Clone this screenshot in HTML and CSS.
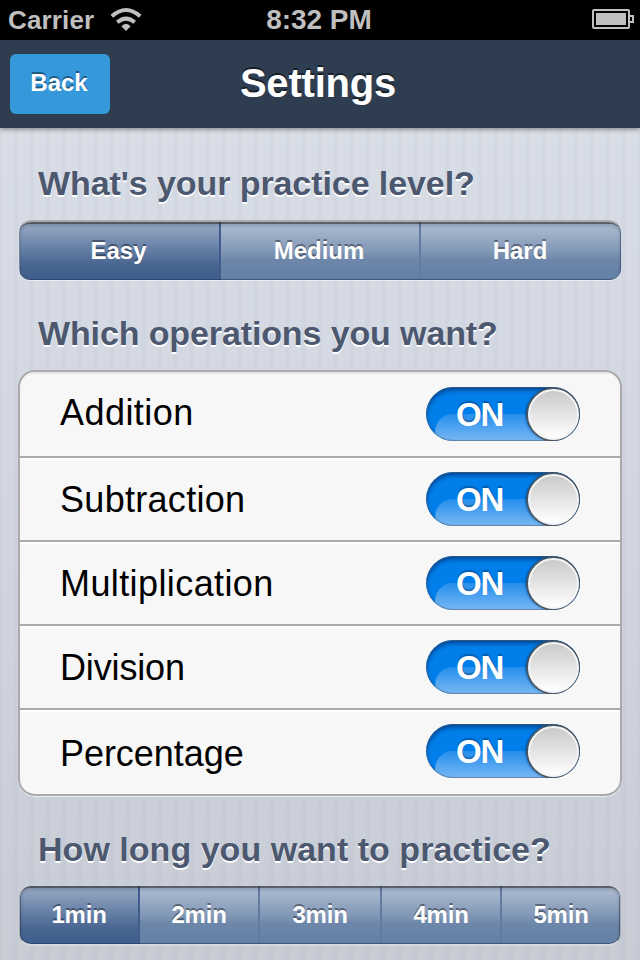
FILE: index.html
```html
<!DOCTYPE html>
<html lang="en">
<head>
<meta charset="utf-8">
<title>Settings</title>
<link rel="stylesheet" href="styles.css">
</head>
<body>
<div class="screen">
  <div class="status">
    <div class="carrier">
      <span class="carrier-name">Carrier</span>
      <svg class="wifi" width="34" height="26" viewBox="0 0 34 26" fill="none" stroke="#bfbfbf" stroke-width="4">
        <path d="M2.800 9.200Q17-3.200 31.200 9.200"/>
        <path d="M8.300 15.300Q17 7.900 25.700 15.300"/>
        <path d="M12.300 19.300Q17 14.200 21.700 19.300L17 24Z" fill="#bfbfbf" stroke="none"/>
      </svg>
    </div>
    <span class="time">8:32 PM</span>
    <svg class="battery" width="42" height="20" viewBox="0 0 42 20">
      <rect x="1" y="1" width="36" height="18" rx="1" fill="none" stroke="#bfbfbf" stroke-width="2"/>
      <rect x="4" y="4" width="30" height="12" fill="#bfbfbf"/>
      <path d="M37 7h4v6h-4" fill="none" stroke="#bfbfbf" stroke-width="2"/>
    </svg>
  </div>
  <header class="nav">
    <button class="back">Back</button>
    <h1 class="title">Settings</h1>
    <span></span>
  </header>
  <main class="content">
    <h2 class="heading level-heading">What's your practice level?</h2>
    <div class="segments levels">
      <button class="segment selected">Easy</button>
      <button class="segment">Medium</button>
      <button class="segment">Hard</button>
    </div>
    <h2 class="heading ops-heading">Which operations you want?</h2>
    <div class="group">
      <div class="row"><span class="label addition">Addition</span><div class="switch"><span class="on">ON</span><i class="knob"></i></div></div>
      <div class="row"><span class="label subtraction">Subtraction</span><div class="switch"><span class="on">ON</span><i class="knob"></i></div></div>
      <div class="row"><span class="label multiplication">Multiplication</span><div class="switch"><span class="on">ON</span><i class="knob"></i></div></div>
      <div class="row"><span class="label division">Division</span><div class="switch"><span class="on">ON</span><i class="knob"></i></div></div>
      <div class="row"><span class="label percentage">Percentage</span><div class="switch"><span class="on">ON</span><i class="knob"></i></div></div>
    </div>
    <h2 class="heading time-heading">How long you want to practice?</h2>
    <div class="segments times">
      <button class="segment selected">1min</button>
      <button class="segment">2min</button>
      <button class="segment">3min</button>
      <button class="segment">4min</button>
      <button class="segment">5min</button>
    </div>
  </main>
</div>
</body>
</html>
```
FILE: styles.css
```css
* { box-sizing: border-box; }
body { margin: 0; font-family: "Liberation Sans", Arial, sans-serif; }
button { border: 0; margin: 0; padding: 0; font-family: inherit; }
.screen {
  width: 640px; height: 960px; overflow: hidden;
  display: flex; flex-direction: column;
}
.status {
  height: 40px; flex: none; background: #000; color: #bfbfbf;
  display: grid; grid-template-columns: 1fr auto 1fr; align-items: center;
  padding: 0 6px 0 8px; font-size: 28px; line-height: 40px; font-weight: bold;
}
.carrier { display: flex; align-items: center; gap: 15px; }
.carrier-name { font-size: 26px; letter-spacing: .15px; }
.time { margin-right: 4px; letter-spacing: -.05px; }
.battery { justify-self: end; margin-bottom: 2px; }
.nav {
  height: 88px; flex: none; background: #2e3e50; z-index: 1;
  display: grid; grid-template-columns: 100px 1fr 100px; align-items: center;
  padding: 0 10px; box-shadow: 0 1px 5px rgba(0,0,0,.45);
}
.back {
  height: 60px; border-radius: 6px; background: #3598db; color: #fff;
  font-size: 24px; font-weight: bold; text-shadow: 0 -2px 0 rgba(0,0,0,.42);
  padding: 0 2px 2px 0;
}
.title {
  margin: 0; padding: 0 4px 2px 0; text-align: center; color: #fff;
  font-size: 40px; line-height: 46px; letter-spacing: -.2px;
  text-shadow: 0 -2px 0 rgba(0,0,0,.5);
}
.content {
  flex: 1; padding: 0 18px; display: flex; flex-direction: column;
  background:
    repeating-linear-gradient(90deg, rgba(110,125,165,.045) 0 2px, transparent 2px 13px, rgba(110,125,165,.045) 13px 16px),
    linear-gradient(#d8dde6, #d1d6e0 45%, #c8ccd5);
}
.heading {
  margin: 0; padding-left: 20px; height: 40px; flex: none;
  color: #4c586f; font-size: 34px; line-height: 40px; letter-spacing: -.08px;
  text-shadow: 0 2px 0 #fff; white-space: nowrap;
}
.level-heading { margin-top: 35px; }
.ops-heading { margin-top: 32px; letter-spacing: -.12px; }
.time-heading { margin-top: 33px; letter-spacing: .03px; }
.segments {
  height: 60px; margin: 0 1px; flex: none; display: grid; position: relative;
  border-radius: 12px; overflow: hidden;
}
.levels {
  margin-top: 17px; height: 61px; border-top: 2px solid #aaacaf; padding-left: 1px;
  border-bottom: 1px solid #e9edf1; grid-template-columns: 201px 200px 1fr;
}
.times {
  margin-top: 17px; border: 1px solid #a8abb0; border-top: 0;
  border-bottom: 2px solid #d5d8dc; grid-template-columns: 120px 120px 122px 120px 1fr;
}
.segments::after {
  content: ""; position: absolute; inset: 0; border-radius: 10px; pointer-events: none;
  border: 1px solid rgba(35,50,75,.5); border-top: 2px solid rgba(45,45,48,.65);
  box-shadow: inset 0 2px 3px rgba(20,30,50,.2);
}
.segment {
  color: #fff; font-weight: bold; font-size: 24px; line-height: 28px;
  text-shadow: 0 -2px 0 rgba(0,0,0,.4);
  background: linear-gradient(#b0bfd3, #8298b7 50%, #6d87aa 65%, #6280a6);
  border-right: 2px solid #637ba2;
}
.levels .segment { padding-right: 2px; }
.times .segment { letter-spacing: -.2px; }
.segment:last-child { border-right: 0; }
.segment.selected {
  background: linear-gradient(#9bacc6, #6680a7 45%, #48658f 75%, #3e5e8c);
  border-right-color: #405b8c;
}
.group {
  margin-top: 17px; height: 426px; flex: none;
  border: 2px solid #aaa; border-radius: 17px; background: #f7f7f7; overflow: hidden;
  box-shadow: 0 1px 0 #eff1f4;
}
.row {
  height: 84px; flex: none; padding: 0 40px; border-bottom: 2px solid #aaa;
  box-shadow: inset 0 2px 0 #fff;
  display: flex; align-items: center; justify-content: space-between;
}
.row:first-child { height: 86px; box-shadow: inset 0 2px 0 #e6e6e6; }
.row:last-child { border-bottom: 0; padding-bottom: 2px; }
.label { font-size: 36px; line-height: 42px; color: #000; letter-spacing: .3px; padding-top: 2px; }
.addition { letter-spacing: .45px; padding: 0 0 2px; }
.multiplication { letter-spacing: .4px; }
.division { letter-spacing: -.15px; }
.percentage { letter-spacing: -.05px; padding-top: 5px; }
.switch {
  width: 154px; height: 54px; border-radius: 27px; position: relative; overflow: hidden;
  background: #007fea; display: flex; align-items: center; justify-content: space-between;
  padding-left: 30px;
}
.switch::before {
  content: ""; position: absolute; left: 9px; top: 27px; width: 180px; height: 54px;
  border-radius: 18px; background: linear-gradient(#258eec, #78b8f4 50%);
}
.switch::after {
  content: ""; position: absolute; inset: 0; border-radius: 27px;
  box-shadow: inset 0 0 0 1px rgba(90,100,115,.55), inset 0 3px 5px rgba(0,30,85,.65);
}
.on {
  position: relative; z-index: 2; color: #fff; font-weight: bold; font-size: 33px;
  line-height: 54px; padding-top: 1px; letter-spacing: -1.2px; text-shadow: 0 -2px 1px rgba(0,60,120,.5);
}
.knob {
  position: relative; z-index: 2; width: 51px; height: 51px; border-radius: 50%;
  margin-right: 1.5px; background: linear-gradient(#cacaca, #fff);
  border: 2px solid #f4f4f4; box-shadow: 0 0 0 1.5px #555, -2px 0 3px #003a78;
}
```
